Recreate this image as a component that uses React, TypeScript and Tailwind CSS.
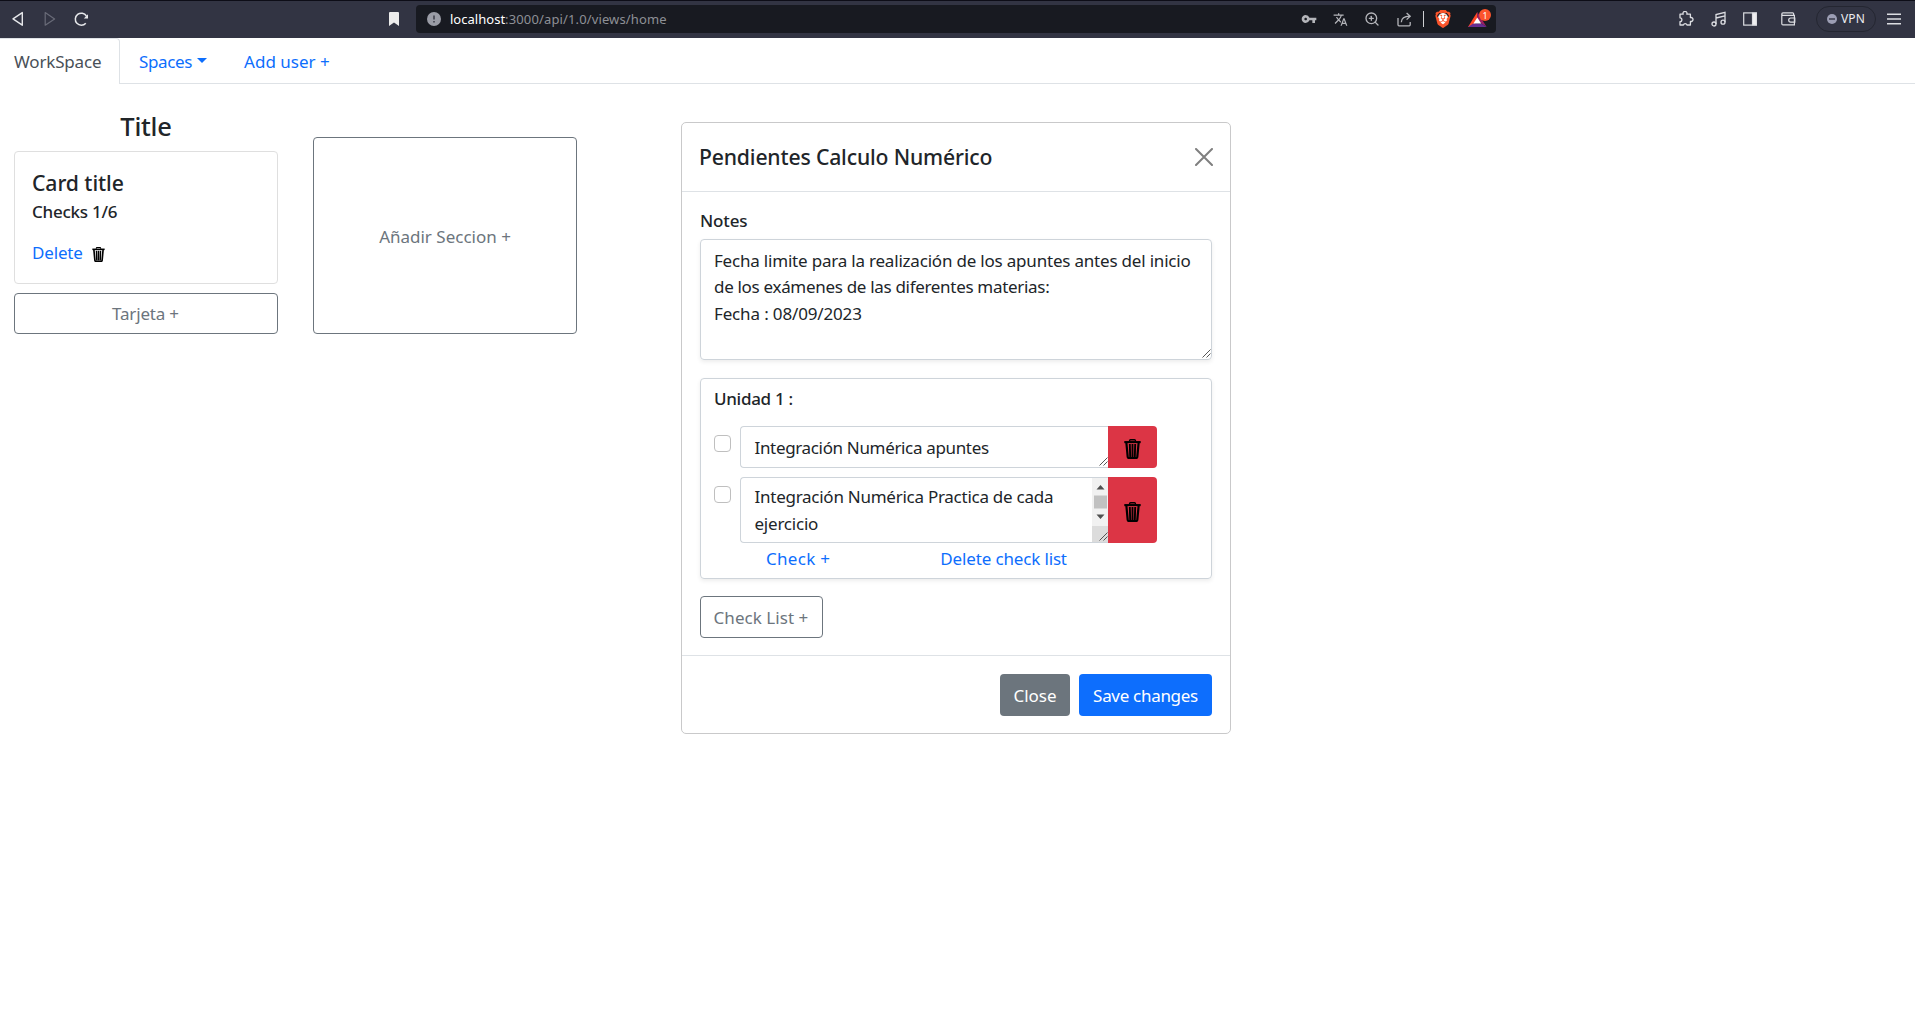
import type { ReactNode } from 'react';
import { ZoomIn } from 'lucide-react';
import { MdTranslate, MdVpnKey } from 'react-icons/md';
import { SiBrave } from 'react-icons/si';

function TrashIcon({ className }: { className: string }) {
  return (
    <svg viewBox="0 0 17 20" className={className} fill="none" stroke="#000">
      <path d="M5.6 2.4V1.6Q5.6 .7 6.5 .7H10.5Q11.4 .7 11.4 1.6V2.4" strokeWidth="1.4" />
      <path d="M.3 3.1H16.7" strokeWidth="2.1" />
      <path d="M2.4 4L3.7 17.9Q3.8 19 4.8 19H12.2Q13.2 19 13.3 17.9L14.6 4" strokeWidth="2.2" />
      <path d="M5.8 5L6.2 18M8.5 5V18M11.2 5L10.8 18" strokeWidth="1.9" />
    </svg>
  );
}

function ResizeGrip() {
  return (
    <svg width="9" height="9" viewBox="0 0 9 9" className="absolute bottom-[1px] right-0" stroke="#444" strokeWidth="0.9" fill="none">
      <path d="M.5 8.5L8.5 .5M4.5 8.5L8.5 4.5" />
    </svg>
  );
}

function BrowserBar() {
  return (
    <header className="flex h-[38px] w-full items-center border-t border-[#0d0d17] bg-[#323443] pb-px text-[#dcdde2]">
      <svg width="12" height="16" viewBox="0 0 12 16" className="ml-[12px] shrink-0" fill="none" stroke="#e6e7ea" strokeWidth="1.4" strokeLinejoin="round">
        <path d="M10.3 1.6V14.2L1 7.9Z" />
      </svg>
      <svg width="12" height="16" viewBox="0 0 12 16" className="ml-[20px] shrink-0" fill="none" stroke="#696b78" strokeWidth="1.2" strokeLinejoin="round">
        <path d="M1.2 1.6V14.2L10.6 7.9Z" />
      </svg>
      <svg width="15" height="16" viewBox="0 0 15 16" className="ml-[18px] shrink-0" fill="none" stroke="#e6e7ea" strokeWidth="1.5">
        <path d="M11.8 12.2A6 6 0 1 1 12.4 5" />
        <path d="M14 3.2V7.6H9.8Z" fill="#e6e7ea" stroke="none" />
      </svg>
      <svg width="10" height="14" viewBox="0 0 10 14" className="ml-[300px] shrink-0" fill="#ececec">
        <path d="M0 1Q0 0 1 0H9Q10 0 10 1V14L5 10.6L0 14Z" />
      </svg>

      <div className="ml-[17px] flex h-[28px] w-[1080px] shrink-0 items-center rounded-[4px] bg-[#181a21]">
        <svg width="14" height="14" viewBox="0 0 14 14" className="ml-[11px]" fill="#9a9ca6">
          <circle cx="7" cy="7" r="7" />
          <path d="M6.1 3.4H7.9V7.6H6.1ZM6.1 8.9H7.9V10.6H6.1Z" fill="#4a4c57" />
        </svg>
        <div className="ml-[9px] whitespace-nowrap text-[13px] leading-[18px] text-[#8e9096]">
          <span className="tracking-[0.02px] text-white">localhost</span>
          <span className="tracking-[0.13px]">:3000/api/1.0/views/home</span>
        </div>
        <div className="ml-auto flex items-center text-[#b4b5ba]">
          <MdVpnKey className="size-[16px]" />
          <MdTranslate className="ml-[16px] size-[15px]" />
          <ZoomIn className="ml-[16px] size-[16px]" strokeWidth={2} />
          <svg width="15" height="15" viewBox="0 0 15 15" className="ml-[17px]" fill="none" stroke="currentColor" strokeWidth="1.3">
            <path d="M1 6V12.8Q1 13.8 2 13.8H12.2Q13.2 13.8 13.2 12.8V10" />
            <path d="M4.3 10.2Q4.6 4.4 12.6 4.2M9.6 1L13.2 4.2L9.6 7.6" />
          </svg>
          <div className="ml-[11px] h-[16px] w-px bg-[#cfd0d3]" />
          <div className="relative ml-[10px] size-[18px]">
            <div className="absolute inset-x-[4px] inset-y-[3px] rounded-full bg-white" />
            <SiBrave className="relative size-[18px] text-[#fb542b]" />
          </div>
          <div className="relative ml-[16px] mr-[9px] h-[18px] w-[19px]">
            <svg width="19" height="18" viewBox="0 0 19 18" className="mt-px">
              <path d="M9.3 1L0 16H5L9.3 8.5Z" fill="#ff4724" />
              <path d="M9.3 1L18.6 16L13.4 12.5L9.3 8.5Z" fill="#9e1f63" />
              <path d="M0 16L5.2 12.5H13.4L18.6 16Z" fill="#662d91" />
              <path d="M9.3 6.5L13.2 12.6H5.4Z" fill="#fff" />
            </svg>
            <div className="absolute -right-[4px] -top-[1px] flex size-[12px] items-center justify-center rounded-full bg-[#fb542b] text-[9px] leading-none text-white">1</div>
          </div>
        </div>
      </div>

      <div className="ml-auto mr-[14px] flex items-center">
        <svg width="16" height="16" viewBox="0 0 16 16" fill="none" stroke="currentColor" strokeWidth="1.3" strokeLinejoin="round">
          <path d="M2 3.2H5.2A2 2 0 1 1 8.8 3.2H12.4V6.6A2 2 0 1 1 12.4 10.4V14H9A1.9 1.9 0 0 0 5.4 14H2V10.6A1.9 1.9 0 0 0 2 6.8Z" />
        </svg>
        <svg width="16" height="16" viewBox="0 0 16 16" className="ml-[17px]" fill="none" stroke="currentColor" strokeWidth="1.3">
          <circle cx="3" cy="13" r="2" />
          <circle cx="12" cy="11.2" r="2" />
          <path d="M5 13V3.6L14 1.4V11.2M5 7L14 4.8" />
        </svg>
        <svg width="14" height="14" viewBox="0 0 14 14" className="ml-[16px]" fill="none" stroke="currentColor" strokeWidth="1.2">
          <rect x=".7" y=".9" width="12.6" height="12.2" />
          <path d="M9.5 1H13.4V13H9.5Z" fill="#f0f0f2" />
        </svg>
        <svg width="15" height="14" viewBox="0 0 15 14" className="ml-[24px]" fill="none" stroke="currentColor" strokeWidth="1.2">
          <path d="M12.6 3.4V1.7Q12.6 .9 11.8 .9H2Q.8 .9 .8 2Q.8 3.4 2 3.4H13.4V12.9H2Q.8 12.9 .8 11.8V2" />
          <path d="M13.8 6H9.8A2.1 2.1 0 0 0 9.8 10.2H13.8Z" />
        </svg>
        <div className="ml-[20px] flex h-[26px] w-[60px] items-center rounded-full border border-[#242631] pl-[10px]">
          <svg width="10" height="10" viewBox="0 0 10 10">
            <circle cx="5" cy="5" r="5" fill="#9c9eb4" />
            <path d="M2 5H8" stroke="#3b3d4d" strokeWidth="1.5" />
          </svg>
          <span className="ml-[4px] text-[12px] leading-[16px] tracking-[0.1px] text-[#ececf0]">VPN</span>
        </div>
        <svg width="14" height="12" viewBox="0 0 14 12" className="ml-[11px]" stroke="currentColor" strokeWidth="1.4">
          <path d="M0 1.2H14M0 6H14M0 10.8H14" />
        </svg>
      </div>
    </header>
  );
}

function NavTabs() {
  return (
    <nav className="flex h-[46px] leading-[26px]">
      <div className="w-[120px] rounded-tr-[4px] border-r border-t border-[#dee2e6] pl-[14px] pt-[10px] tracking-[-0.17px] text-[#495057]">WorkSpace</div>
      <div className="flex flex-1 border-b border-[#dee2e6] pt-[11px] text-[#0d6efd]">
        <a className="ml-[19px] tracking-[-0.36px]">Spaces</a>
        <div className="ml-[5px] mt-[9px] h-0 w-0 border-x-[5px] border-t-[5px] border-x-transparent border-t-[#0d6efd]" />
        <a className="ml-[37px]">Add user +</a>
      </div>
    </nav>
  );
}

function Board() {
  return (
    <div className="flex">
      <section className="ml-[14px] mt-[28px] w-[264px]">
        <h4 className="text-center text-[25.5px] font-medium leading-[28px] tracking-[-0.22px]">Title</h4>
        <div className="mt-[11px] h-[133px] rounded-[4px] border border-[#dfdfdf] pl-[17px] pt-[18px]">
          <h5 className="text-[21.2px] font-medium leading-[26px] tracking-[-0.08px]">Card title</h5>
          <h6 className="mt-[3px] font-medium leading-[26px] tracking-[-0.25px]">Checks 1/6</h6>
          <div className="mt-[15px] flex items-center leading-[26px]">
            <a className="tracking-[-0.15px] text-[#0d6efd]">Delete</a>
            <TrashIcon className="ml-[9px] mt-[3px] h-[15px] w-[13px]" />
          </div>
        </div>
        <button className="mt-[9px] flex h-[41px] w-full items-center justify-center rounded-[4px] border border-[#6c757d] pr-px tracking-[-0.18px] text-[#6c757d]">Tarjeta +</button>
      </section>
      <button className="ml-[35px] mt-[53px] flex h-[197px] w-[264px] items-center justify-center rounded-[4px] border border-[#6c757d] pt-[3px] text-[#6c757d]">Añadir Seccion +</button>
    </div>
  );
}

function CheckRow({ children, className }: { children: ReactNode; className: string }) {
  return (
    <div className={`flex ${className}`}>
      <div className="mt-[8.5px] size-[17px] rounded-[4px] border border-[#bfbfbf] bg-white" />
      <div className="relative ml-[9px] flex w-[368px] overflow-hidden rounded-l-[4px] border border-r-0 border-[#ced4da] pl-[13.5px]">
        {children}
        <ResizeGrip />
      </div>
      <button className="flex w-[49px] items-center justify-center rounded-r-[4px] bg-[#dc3545]">
        <TrashIcon className="mt-[3px] h-[20px] w-[17px]" />
      </button>
    </div>
  );
}

function Modal() {
  return (
    <div className="ml-[104px] mt-[38px] h-[612px] w-[550px] rounded-[5px] border border-[#c9c9ca]">
      <div className="flex h-[69px] items-center justify-between border-b border-[#dee2e6] pl-[17px] pr-[17px]">
        <h5 className="text-[21.2px] font-medium leading-[26px] tracking-[-0.17px]">Pendientes Calculo Numérico</h5>
        <svg width="18" height="18" viewBox="0 0 18 18" stroke="#7f7f7f" strokeWidth="2" strokeLinecap="round">
          <path d="M1 1L17 17M17 1L1 17" />
        </svg>
      </div>
      <div className="h-[464px] border-b border-[#dee2e6] px-[18px] pt-[16px]">
        <div className="font-medium leading-[26px] tracking-[-0.15px]">Notes</div>
        <div className="relative mt-[5px] h-[121px] w-[512px] whitespace-nowrap rounded-[4px] border border-[#ced4da] pl-[13px] pt-[8px] leading-[26.4px] shadow-[0_2px_4px_rgba(0,0,0,0.075)]">
          <p className="tracking-[-0.2px]">Fecha limite para la realización de los apuntes antes del inicio</p>
          <p className="tracking-[-0.31px]">de los exámenes de las diferentes materias:</p>
          <p className="tracking-[-0.15px]">Fecha : 08/09/2023</p>
          <ResizeGrip />
        </div>
        <div className="mt-[18px] h-[201px] w-[512px] rounded-[4px] border border-[#ced4da] pl-[13px] pt-[7px] shadow-[0_2px_4px_rgba(0,0,0,0.075)]">
          <div className="font-medium leading-[26px] tracking-[-0.3px]">Unidad 1 :</div>
          <CheckRow className="mt-[14px] h-[42px]">
            <p className="pt-[8px] leading-[26px] tracking-[-0.34px]">Integración Numérica apuntes</p>
          </CheckRow>
          <CheckRow className="mt-[9px] h-[66px]">
            <div className="whitespace-nowrap pt-[6px] leading-[26.5px]">
              <p className="tracking-[-0.26px]">Integración Numérica Practica de cada</p>
              <p className="tracking-[-0.22px]">ejercicio</p>
            </div>
            <div className="ml-auto flex w-[16px] flex-col bg-[#f1f1f1]">
              <svg width="16" height="48" viewBox="0 0 16 48">
                <path d="M4.5 11.5L8.5 7L12.5 11.5ZM4.5 36.5L8.5 41L12.5 36.5Z" fill="#505050" />
                <path d="M2 17.5H15V30.5H2Z" fill="#c1c1c1" />
              </svg>
              <div className="flex-1 bg-[#dcdcdc]" />
            </div>
          </CheckRow>
          <div className="flex pt-[3px] leading-[26px] text-[#0d6efd]">
            <a className="ml-[52px] tracking-[0.3px]">Check +</a>
            <a className="ml-[110px] tracking-[-0.15px]">Delete check list</a>
          </div>
        </div>
        <button className="mt-[17px] flex h-[42px] w-[123px] items-center justify-center rounded-[4px] border border-[#6c757d] pr-px pt-[2px] tracking-[0.05px] text-[#6c757d]">Check List +</button>
      </div>
      <div className="flex justify-end gap-[9px] pr-[18px] pt-[18px] text-white">
        <button className="h-[42px] w-[70px] rounded-[4px] bg-[#6c757d] pt-px">Close</button>
        <button className="h-[42px] w-[133px] rounded-[4px] bg-[#0d6efd] pt-px tracking-[-0.3px]">Save changes</button>
      </div>
    </div>
  );
}

export default function App() {
  return (
    <div className="h-[1010px] w-[1915px] overflow-hidden bg-white font-['Noto_Sans',sans-serif] text-[17px] text-[#212529]">
      <BrowserBar />
      <NavTabs />
      <main className="flex">
        <Board />
        <Modal />
      </main>
    </div>
  );
}
